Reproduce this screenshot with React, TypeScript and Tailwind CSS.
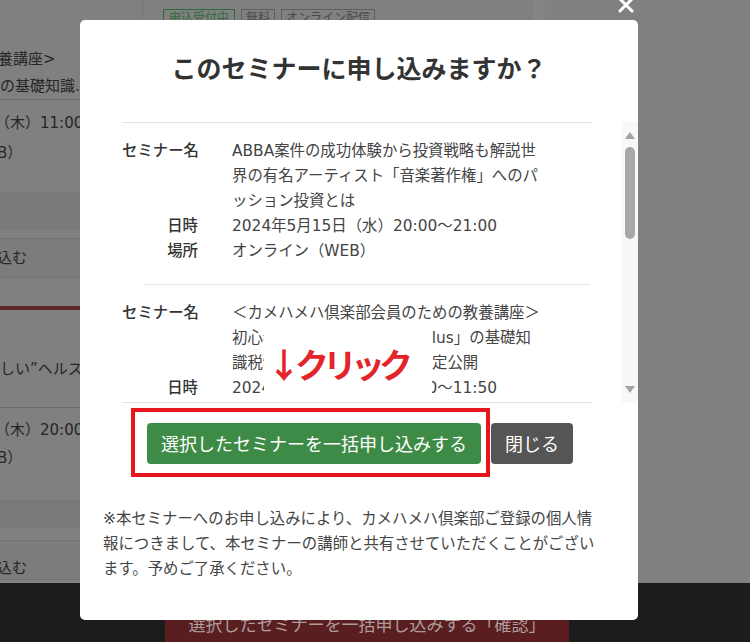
import React from 'react'

function ScrollArrow({ down }: { down?: boolean }) {
  return (
    <svg width="10" height="7" viewBox="0 0 10 7" className="fill-[#a3a3a3]">
      {down ? <path d="M0 0 H10 L5 7 Z" /> : <path d="M0 7 H10 L5 0 Z" />}
    </svg>
  )
}

function LeftList() {
  return (
    <div className="w-[143px] shrink-0 overflow-hidden border-r border-[#767676] text-[15px] leading-[27px] text-[#262626] whitespace-nowrap">
      <div className="pt-[46px]">
        <p className="-ml-[17px]">教養講座&gt;</p>
        <p>の基礎知識…</p>
      </div>
      <div className="mt-[-1px] border-t border-[#6c6c6c] pt-[8px] leading-[30px]">
        <p className="-ml-[5px]">（木）11:00～</p>
        <p className="-ml-[3px]">B）</p>
      </div>
      <div className="mt-[24px] h-[38px] bg-[#797979]" />
      <div className="mt-[8px] flex h-[40px] items-center border-y border-[#747474] bg-[#7c7c7c]">
        <span className="-ml-[3px]">込む</span>
      </div>
      <div className="mt-[28px] h-[4px] bg-[#5e2426]" />
      <div className="pt-[46px]">
        <p className="leading-[27px]">しい”ヘルスケア</p>
      </div>
      <div className="mt-[24px] border-t border-[#6c6c6c] pt-[8px] leading-[28px]">
        <p className="-ml-[5px]">（木）20:00～</p>
        <p className="-ml-[3px]">B）</p>
      </div>
      <div className="mt-[28px] h-[28px] bg-[#797979]" />
      <div className="mt-[12px] flex h-[40px] items-center border-y border-[#747474] bg-[#7c7c7c]">
        <span className="-ml-[3px] pt-[16px]">込む</span>
      </div>
    </div>
  )
}

function Tags() {
  return (
    <div className="flex gap-[6px] pl-[20px] pt-[9px] text-[12px] leading-[16px]">
      <span className="border border-[#2f6b3a] px-[5px] text-[#2f6b3a]">申込受付中</span>
      <span className="border border-[#5e5e5e] px-[4px] text-[#4a4a4a]">無料</span>
      <span className="border border-[#5e5e5e] px-[4px] text-[#4a4a4a]">オンライン配信</span>
    </div>
  )
}

function SeminarRow({ label, children }: { label: string; children: React.ReactNode }) {
  return (
    <>
      <dt className="whitespace-nowrap text-right font-medium text-[#333]">{label}</dt>
      <dd className="text-[#444]">{children}</dd>
    </>
  )
}

export default function App() {
  return (
    <div className="relative h-[642px] w-[750px] overflow-hidden bg-[#808080] font-['DejaVu_Sans','Noto_Sans_CJK_JP',sans-serif]">
      {/* page underneath the overlay */}
      <div className="flex h-full flex-col">
        <div className="flex flex-1 overflow-hidden">
          <LeftList />
          <div className="w-[390px] shrink-0">
            <Tags />
          </div>
          <div className="w-[26px] shrink-0 bg-gradient-to-r from-[#858585] to-[#808080]" />
          <div className="flex-1" />
        </div>
        <footer className="h-[59px] shrink-0 bg-[#1c1c1c]">
          <div className="ml-[165px] mt-[28px] flex h-[40px] w-[404px] items-start justify-center bg-[#5a1e20] pt-[2px] text-[17px] leading-[24px] text-[#ad9c9c]">
            選択したセミナーを一括申し込みする「確認」
          </div>
        </footer>
      </div>

      {/* close */}
      <svg
        className="absolute left-[618px] top-[-3px]"
        width="16"
        height="16"
        viewBox="0 0 16 16"
        stroke="white"
        strokeWidth="3"
        strokeLinecap="round"
      >
        <path d="M2 2 L14 14 M14 2 L2 14" />
      </svg>

      {/* modal */}
      <div className="absolute left-[80px] top-[20px] flex h-[600px] w-[558px] flex-col rounded-[5px] bg-white">
        <h2 className="mt-[32px] text-center text-[25px] font-bold leading-[36px] text-[#333]">
          このセミナーに申し込みますか？
        </h2>

        <div className="ml-[42px] mt-[34px] flex h-[281px]">
          <div className="w-[470px] overflow-hidden border-y border-[#e4e4e4] text-[15.4px] leading-[25px]">
            <dl className="grid grid-cols-[76px_316px] gap-x-[34px] pb-[20px] pt-[16px]">
              <SeminarRow label="セミナー名">
                ABBA案件の成功体験から投資戦略も解説世界の有名アーティスト「音楽著作権」へのパッション投資とは
              </SeminarRow>
              <SeminarRow label="日時">2024年5月15日（水）20:00～21:00</SeminarRow>
              <SeminarRow label="場所">オンライン（WEB）</SeminarRow>
            </dl>
            <div className="ml-[23px] mr-[2px] border-t border-[#e4e4e4]" />
            <dl className="grid grid-cols-[76px_316px] gap-x-[34px] pb-[20px] pt-[16px]">
              <SeminarRow label="セミナー名">
                ＜カメハメハ倶楽部会員のための教養講座＞
                <br />
                初心者のための「新NISA・Plus」の基礎知
                <br />
                識税制改正セミナー動画を限定公開
              </SeminarRow>
              <SeminarRow label="日時">2024年5月16日（木）11:00～11:50</SeminarRow>
              <SeminarRow label="場所">オンライン（WEB）</SeminarRow>
            </dl>
          </div>
          <div className="ml-[30px] flex w-[16px] flex-col items-center bg-[#f8f8f8] pt-[10px]">
            <ScrollArrow />
            <div className="mt-[8px] h-[92px] w-[10px] rounded-full bg-[#a8a8a8]" />
            <div className="flex-1" />
            <div className="pb-[10px]">
              <ScrollArrow down />
            </div>
          </div>
        </div>

        <div className="ml-[67px] mt-[20px] flex gap-[10px] text-[18px] text-white">
          <button className="h-[41px] rounded-[4px] bg-[#3d8b46] px-[14px] font-['Noto_Sans_CJK_JP',sans-serif]">
            選択したセミナーを一括申し込みする
          </button>
          <button className="h-[41px] rounded-[4px] bg-[#555] px-[14px] font-['Noto_Sans_CJK_JP',sans-serif]">
            閉じる
          </button>
        </div>

        <p className="ml-[23px] mt-[43px] w-[500px] text-[15.4px] leading-[25px] text-[#444]">
          ※本セミナーへのお申し込みにより、カメハメハ倶楽部ご登録の個人情報につきまして、本セミナーの講師と共有させていただくことがございます。予めご了承ください。
        </p>
      </div>

      {/* screenshot annotations */}
      <div className="absolute left-[264px] top-[326px] flex h-[75px] w-[168px] items-center bg-white pl-[3px] font-['Noto_Sans_CJK_JP',sans-serif] text-[34px] font-bold leading-none tracking-[-6px] text-[#e3252b]">
        ↓クリック
      </div>
      <div className="absolute left-[131px] top-[408px] h-[69px] w-[359px] border-[4px] border-[#e8151d]" />
    </div>
  )
}
